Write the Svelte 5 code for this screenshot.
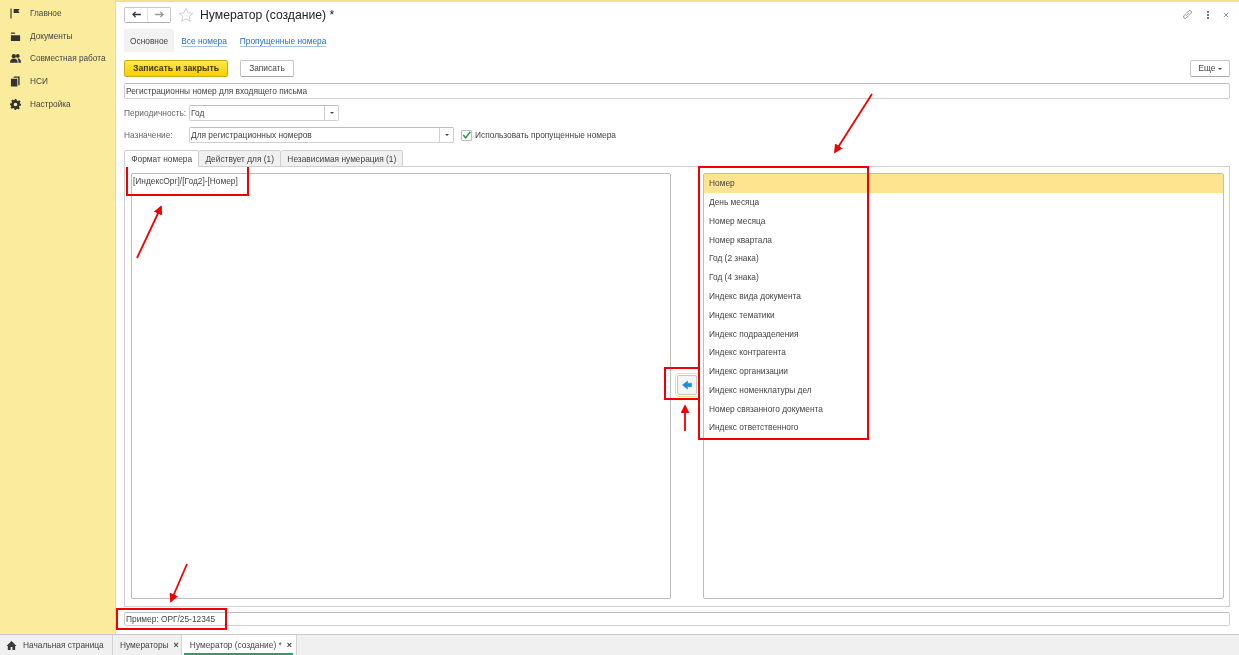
<script>
	const menu = [
		{ label: 'Главное', icon: 'flag' },
		{ label: 'Документы', icon: 'folder' },
		{ label: 'Совместная работа', icon: 'people' },
		{ label: 'НСИ', icon: 'books' },
		{ label: 'Настройка', icon: 'gear' }
	];

	const fields = [
		'Номер',
		'День месяца',
		'Номер месяца',
		'Номер квартала',
		'Год (2 знака)',
		'Год (4 знака)',
		'Индекс вида документа',
		'Индекс тематики',
		'Индекс подразделения',
		'Индекс контрагента',
		'Индекс организации',
		'Индекс номенклатуры дел',
		'Номер связанного документа',
		'Индекс ответственного'
	];

	const boxes = [
		[127, 165, 121, 30],
		[665, 368, 34, 31],
		[699, 167, 169, 272],
		[117, 609, 109, 20]
	];

	const arrows = [
		[137, 258, 161, 207],
		[872, 94, 835, 152],
		[685, 431, 685, 406],
		[187, 564, 171, 601]
	];
</script>

<div class="page">
	<aside class="sidebar">
		{#each menu as item}
			<div class="menu-item">
				<svg class="menu-icon" viewBox="0 0 12 12" fill="#333">
					{#if item.icon === 'flag'}
						<path d="M0.500 0.500h1.200v11H0.500zM4 1h6.500L9 3.250l1.500 2.250H4z" />
					{:else if item.icon === 'folder'}
						<path d="M1 1.500h4l1 1.500H1zM1 4.500h10V11H1z" />
					{:else if item.icon === 'people'}
						<circle cx="4.200" cy="3.500" r="2.300" />
						<circle cx="8.500" cy="3.200" r="2.100" />
						<path d="M0 10.500c0-3 1.800-4.500 4.200-4.500s4.300 1.500 4.300 4.500zM9.300 10.500c0-2-.4-3.400-1.300-4.500 2.600-.5 4 1.300 4 4.500z" />
					{:else if item.icon === 'books'}
						<path d="M4 0.500h6.500V10H9V2H4zM1 3h7v8.500H1z" />
					{:else}
						<path d="M5 0h2l.4 1.700 1.200.5L10.100 1.300l1.400 1.400-.9 1.500.5 1.200L12 5v2l-1.700.4-.5 1.200.9 1.500-1.400 1.400-1.500-.9-1.200.5L7 12H5l-.4-1.700-1.200-.5-1.500.9L.5 9.300l.9-1.500-.5-1.200L0 7V5l1.700-.4.5-1.200-.9-1.500L2.700.5l1.500.9 1.200-.5zM6 4a2 2 0 100 4 2 2 0 000-4z" fill-rule="evenodd" />
					{/if}
				</svg>
				<span>{item.label}</span>
			</div>
		{/each}
	</aside>

	<main class="main">
		<header class="title-row">
			<div class="nav-buttons">
				<button class="nav-btn">
					<svg viewBox="0 0 10 8" width="9" height="7"><path d="M4 1L1 4l3 3M1.500 4H10" fill="none" stroke="#333" stroke-width="1.500" /></svg>
				</button>
				<button class="nav-btn">
					<svg viewBox="0 0 10 8" width="9" height="7"><path d="M6 1l3 3-3 3M8.500 4H0" fill="none" stroke="#999" stroke-width="1.500" /></svg>
				</button>
			</div>
			<svg class="star" viewBox="0 0 18 18" width="16" height="16"><path d="M9 1.500l2.300 5 5.300.6-4 3.600 1.100 5.300L9 13.300 4.300 16l1.100-5.300-4-3.600 5.300-.6z" fill="none" stroke="#c9c9c9" /></svg>
			<h1>Нумератор (создание) *</h1>
			<div class="window-icons">
				<svg viewBox="0 0 12 12" width="11" height="11" fill="none" stroke="#8a8a8a"><path d="M4.500 7.500l3-3M4.500 5L2 7.500a1.800 1.800 0 002.500 2.500L7 7.500M5 4.500L7.500 2A1.800 1.800 0 0110 4.500L7.500 7" /></svg>
				<span class="dots"><i></i><i></i><i></i></span>
				<svg viewBox="0 0 8 8" width="6" height="6" stroke="#777"><path d="M1 1l6 6M7 1L1 7" /></svg>
			</div>
		</header>

		<nav class="section-tabs">
			<span class="section-active">Основное</span>
			<a href="#all">Все номера</a>
			<a href="#missed">Пропущенные номера</a>
		</nav>

		<div class="command-bar">
			<button class="btn-primary">Записать и закрыть</button>
			<button class="btn">Записать</button>
			<button class="btn btn-more">Еще <i class="caret"></i></button>
		</div>

		<div class="input name-input">Регистрационны номер для входящего письма</div>

		<div class="form-row">
			<span class="label">Периодичность:</span>
			<div class="input select period"><span>Год</span><b><i class="caret"></i></b></div>
		</div>

		<div class="form-row">
			<span class="label">Назначение:</span>
			<div class="input select purpose"><span>Для регистрационных номеров</span><b><i class="caret"></i></b></div>
			<span class="checkbox">
				<svg viewBox="0 0 11 11" width="10" height="10"><path d="M1.500 5.500l3 3.500L10 1.500" fill="none" stroke="#1f9a47" stroke-width="1.800" /></svg>
			</span>
			<span class="check-label">Использовать пропущенные номера</span>
		</div>

		<div class="tabs">
			<span class="tab tab-active">Формат номера</span>
			<span class="tab">Действует для (1)</span>
			<span class="tab">Независимая нумерация (1)</span>
		</div>

		<section class="panel">
			<div class="format-box">[ИндексОрг]/[Год2]-[Номер]</div>
			<div class="transfer">
				<button class="transfer-btn">
					<svg viewBox="0 0 10 10" width="10" height="10"><path d="M5.500 1v2.300H9.500v3.400H5.500V9L.5 5z" fill="#1c8fd6" stroke="#1c8fd6" stroke-linejoin="round" stroke-width=".6" /></svg>
				</button>
			</div>
			<ul class="field-list">
				{#each fields as field, i}
					<li class:selected={i === 0}>{field}</li>
				{/each}
			</ul>
		</section>

		<div class="input example">Пример: ОРГ/25-12345</div>
	</main>

	<footer class="taskbar">
		<div class="task home">
			<svg viewBox="0 0 12 12" width="11" height="11" fill="#3a3a3a"><path d="M6 1L.5 6.500H2V11h3V7.500h2V11h3V6.500h1.500z" /></svg>
			<span>Начальная страница</span>
		</div>
		<div class="task">Нумераторы <span class="task-close">×</span></div>
		<div class="task task-active">Нумератор (создание) * <span class="task-close">×</span></div>
	</footer>

	<svg class="annotations" width="1239" height="655">
		<defs>
			<marker id="head" markerWidth="5" markerHeight="5" refX="4" refY="2.500" orient="auto">
				<path d="M0 0L5 2.500 0 5z" fill="#f00000" />
			</marker>
		</defs>
		{#each boxes as [x, y, w, h]}
			<rect {x} {y} width={w} height={h} fill="none" stroke="#f00000" stroke-width="2" />
		{/each}
		{#each arrows as [x1, y1, x2, y2]}
			<line {x1} {y1} {x2} {y2} stroke="#f00000" stroke-width="1.800" marker-end="url(#head)" />
		{/each}
	</svg>
</div>

<style>
	:global(body) {
		margin: 0;
	}

	.page {
		position: relative;
		display: grid;
		grid-template-columns: 116px 1fr;
		grid-template-rows: 634px 21px;
		width: 1239px;
		height: 655px;
		overflow: hidden;
		font-family: 'Liberation Sans', Arial, sans-serif;
		font-size: 8.350px;
		color: #444;
		background: #fff;
		filter: blur(0.3px);
	}

	.sidebar {
		display: flex;
		flex-direction: column;
		padding-top: 2px;
		background: #fbec9d;
		border-right: 1px solid #e0d9a8;
		box-sizing: border-box;
	}

	.menu-item {
		display: flex;
		align-items: center;
		gap: 9px;
		height: 22.750px;
		padding-left: 10px;
		font-size: 8.250px;
	}

	.menu-icon {
		width: 11px;
		height: 11px;
	}

	.main {
		display: flex;
		flex-direction: column;
		padding: 4px 9px 0 8px;
		border-top: 2px solid #f2e08a;
		box-sizing: border-box;
		min-width: 0;
	}

	.title-row {
		display: flex;
		align-items: center;
		height: 17px;
	}

	.nav-buttons {
		display: flex;
		width: 47px;
		height: 16px;
		border: 1px solid #c8c8c8;
		border-bottom-color: #b0b0b0;
		border-radius: 2px;
		box-sizing: border-box;
	}

	.nav-btn {
		flex: 1;
		display: flex;
		align-items: center;
		justify-content: center;
		padding: 0;
		border: 0;
		background: #fff;
	}

	.nav-btn + .nav-btn {
		border-left: 1px solid #e2e2e2;
	}

	.star {
		margin-left: 7px;
	}

	h1 {
		margin: 0 0 0 6px;
		font-size: 12.200px;
		font-weight: 400;
		color: #222;
	}

	.window-icons {
		display: flex;
		align-items: center;
		gap: 14px;
		margin-left: auto;
		padding-right: 1px;
	}

	.dots {
		display: flex;
		flex-direction: column;
		gap: 1px;
	}

	.dots i {
		width: 2px;
		height: 2px;
		background: #777;
	}

	.section-tabs {
		display: flex;
		align-items: center;
		height: 23px;
		margin-top: 6px;
	}

	.section-active {
		display: flex;
		align-items: center;
		height: 100%;
		padding: 0 6px;
		margin-right: 7px;
		background: #f2f2f2;
		border-radius: 2px;
	}

	.section-tabs a {
		margin-right: 13px;
		color: #2a6fb8;
		text-decoration: underline;
		text-decoration-color: #a8c4e2;
		text-underline-offset: 2px;
	}

	.command-bar {
		display: flex;
		align-items: center;
		height: 18px;
		margin-top: 7px;
	}

	button {
		font: inherit;
		color: inherit;
	}

	.btn-primary {
		width: 104px;
		height: 17px;
		padding: 0;
		font-size: 8.700px;
		font-weight: 700;
		color: #3d3600;
		background: linear-gradient(#ffe94d, #f4cf00);
		border: 1px solid #c9ab12;
		border-radius: 2px;
	}

	.btn {
		height: 17px;
		padding: 0 8px;
		background: #fff;
		border: 1px solid #c4c4c4;
		border-bottom-color: #a8a8a8;
		border-radius: 2px;
	}

	.btn-primary + .btn {
		width: 54px;
		margin-left: 12px;
		padding: 0;
	}

	.btn-more {
		width: 40px;
		margin-left: auto;
		padding: 0;
	}

	.caret {
		display: inline-block;
		width: 0;
		height: 0;
		vertical-align: middle;
		border: 2px solid transparent;
		border-top: 2px solid #444;
		border-bottom: 0;
	}

	.input {
		display: flex;
		align-items: center;
		box-sizing: border-box;
		height: 16px;
		padding-left: 1px;
		background: #fff;
		border: 1px solid #cfcfcf;
		border-top-color: #bdbdbd;
		border-radius: 2px;
	}

	.name-input {
		margin-top: 6px;
	}

	.form-row {
		display: flex;
		align-items: center;
		height: 16px;
		margin-top: 6px;
	}

	.label {
		width: 65px;
		color: #666;
	}

	.select {
		justify-content: space-between;
		padding-right: 0;
	}

	.select b {
		display: flex;
		align-items: center;
		justify-content: center;
		width: 13px;
		height: 100%;
		border-left: 1px solid #cfcfcf;
	}

	.period {
		width: 150px;
	}

	.purpose {
		width: 265px;
	}

	.checkbox {
		display: flex;
		align-items: center;
		justify-content: center;
		box-sizing: border-box;
		width: 11px;
		height: 11px;
		margin-left: 7px;
		border: 1px solid #bdbdbd;
		border-radius: 1px;
	}

	.check-label {
		margin-left: 3px;
	}

	.tabs {
		position: relative;
		z-index: 1;
		display: flex;
		height: 17px;
		margin-top: 7px;
	}

	.tab {
		display: flex;
		align-items: center;
		padding: 0 6.200px;
		background: #f0f0f0;
		border: 1px solid #cfcfcf;
		border-left: 0;
		border-radius: 2px 2px 0 0;
		box-sizing: border-box;
	}

	.tab-active {
		background: #fff;
		border-left: 1px solid #cfcfcf;
		border-bottom-color: #fff;
	}

	.panel {
		display: grid;
		grid-template-columns: 540px 32px 521px;
		height: 441px;
		margin-top: -1px;
		padding: 6px 6px 7px;
		border: 1px solid #cfcfcf;
		box-sizing: border-box;
	}

	.format-box,
	.field-list {
		margin: 0;
		border: 1px solid #bdbdbd;
		border-radius: 2px;
		background: #fff;
	}

	.format-box {
		padding: 2px 1px;
		line-height: 10px;
	}

	.transfer {
		display: flex;
		align-items: center;
		justify-content: flex-end;
		padding: 0 6px 3px 0;
	}

	.transfer-btn {
		display: flex;
		align-items: center;
		justify-content: center;
		width: 20px;
		height: 20px;
		padding: 0;
		background: #f5f5f5;
		border: 1px solid #c8c8c8;
		outline: 1px solid #f6dd7d;
		outline-offset: 1px;
		border-radius: 2px;
	}

	.field-list {
		list-style: none;
		padding: 0;
	}

	.field-list li {
		display: flex;
		align-items: center;
		height: 18.770px;
		padding-left: 5px;
	}

	.field-list .selected {
		background: #ffe48f;
	}

	.example {
		margin-top: 5px;
		height: 14px;
	}

	.taskbar {
		grid-column: 1 / -1;
		display: flex;
		align-items: stretch;
		background: #f0f0f0;
		border-top: 1px solid #c8c8c8;
		box-sizing: border-box;
	}

	.task {
		display: flex;
		align-items: center;
		gap: 5px;
		padding: 0 2px 0 7px;
		border-right: 1px solid #d2d2d2;
		white-space: nowrap;
	}

	.home {
		gap: 6px;
		width: 113px;
		padding-left: 6px;
		box-sizing: border-box;
	}

	.task-close {
		font-weight: 700;
		font-size: 9px;
		line-height: 1;
	}

	.task-active {
		padding: 0 4px 0 8px;
		background: linear-gradient(#2f9e6b, #2f9e6b) center bottom / 109px 2px no-repeat, #fff;
	}

	.annotations {
		position: absolute;
		top: 0;
		left: 0;
		pointer-events: none;
	}
</style>
